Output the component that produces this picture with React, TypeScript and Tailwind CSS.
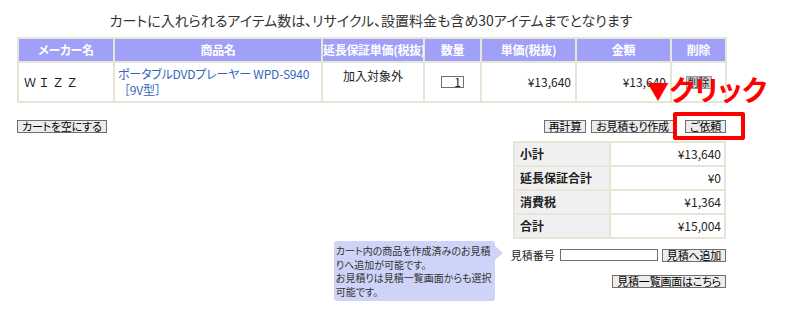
import React from 'react';

const jp = "font-['Noto_Sans_CJK_JP',sans-serif] [font-feature-settings:'palt']";

function OldButton({ label, className = '' }: { label: string; className?: string }) {
  return (
    <button
      className={`h-[13px] whitespace-nowrap border border-[#6f6f6f] bg-[#ececec] px-[4px] text-[11px] leading-[11px] tracking-[-0.2px] text-black ${className}`}
    >
      {label}
    </button>
  );
}

const headers = [
  { label: 'メーカー名', w: 'w-[96px]' },
  { label: '商品名', w: 'w-[208px]' },
  { label: '延長保証単価(税抜)', w: 'w-[102px]' },
  { label: '数量', w: 'w-[57px]' },
  { label: '単価(税抜)', w: 'w-[95px]' },
  { label: '金額', w: 'w-[95px]' },
  { label: '削除', w: 'w-[55px]' },
];

const summary = [
  { label: '小計', value: '¥13,640' },
  { label: '延長保証合計', value: '¥0' },
  { label: '消費税', value: '¥1,364' },
  { label: '合計', value: '¥15,004' },
];

export default function App() {
  return (
    <div className={`relative h-[312px] w-[785px] overflow-hidden bg-white text-[12px] text-[#222] ${jp}`}>
      <div className="w-[742px] pt-[10px]">
        <p className="text-center text-[14px] leading-[20px] text-[#333]">
          カートに入れられるアイテム数は、リサイクル、設置料金も含め30アイテムまでとなります
        </p>

        <table className="ml-[17px] mt-[7px] w-[708px] table-fixed border-collapse border-2 border-[#e6e6d6]">
          <thead>
            <tr className="h-[24px] bg-[#a0a0f8]">
              {headers.map((h) => (
                <th
                  key={h.label}
                  className={`${h.w} whitespace-nowrap border-2 border-[#e6e6d6] p-0 text-center text-[12px] font-bold leading-[18px] tracking-[-0.3px] text-white`}
                >
                  {h.label}
                </th>
              ))}
            </tr>
          </thead>
          <tbody>
            <tr className="h-[40px]">
              <td className="border-2 border-[#e6e6d6] pl-[5px] align-middle tracking-[2px] [font-feature-settings:normal]">
                ＷＩＺＺ
              </td>
              <td className="border-2 border-[#e6e6d6] pl-[3px] align-middle leading-[16px] tracking-[-0.2px] text-[#3366bb]">
                ポータブルDVDプレーヤー WPD-S940
                <br />
                <span className="[font-feature-settings:normal]">［9V型］</span>
              </td>
              <td className="border-2 border-[#e6e6d6] pt-[4px] text-center align-top">加入対象外</td>
              <td className="border-2 border-[#e6e6d6] text-center align-middle">
                <span className="inline-block h-[12px] w-[23px] border border-[#6f6f6f] pr-[2px] text-right text-[12px] leading-[10px]">
                  1
                </span>
              </td>
              <td className="border-2 border-[#e6e6d6] pr-[4px] text-right align-middle">¥13,640</td>
              <td className="border-2 border-[#e6e6d6] pr-[4px] text-right align-middle">¥13,640</td>
              <td className="border-2 border-[#e6e6d6] text-center align-middle">
                <span className="inline-block h-[13px] border border-[#999] bg-[#d4d4d4] px-[1px] text-[11px] leading-[11px]">
                  削除
                </span>
              </td>
            </tr>
          </tbody>
        </table>

        <div className="mt-[17px] flex items-center justify-between pl-[17px] pr-[16px]">
          <OldButton label="カートを空にする" />
          <div className="flex items-center gap-[5px]">
            <OldButton label="再計算" />
            <OldButton label="お見積もり作成" />
            <OldButton label="ご依頼" className="ml-[6px]" />
          </div>
        </div>

        <div className="mt-[8px] flex justify-end pr-[16px]">
          <table className="w-[213px] table-fixed border-collapse border-2 border-[#e6e6d6]">
            <tbody>
              {summary.map((s) => (
                <tr key={s.label} className="h-[24px]">
                  <td className="w-[96px] border-2 border-[#e6e6d6] bg-[#f0f0f0] pl-[5px] font-bold">{s.label}</td>
                  <td className="border-2 border-[#e6e6d6] pr-[3px] text-right">{s.value}</td>
                </tr>
              ))}
            </tbody>
          </table>
        </div>

        <div className="mt-[2px] flex items-start justify-end pr-[16px]">
          <div className="relative mr-[16px] w-[161px] rounded-[3px] bg-[#cdd4f7] px-[2px] py-[3px] text-[10px] leading-[13.5px] text-[#333]">
            <div className="whitespace-nowrap">カート内の商品を作成済みのお見積</div>
            <div className="whitespace-nowrap">りへ追加が可能です。</div>
            <div className="whitespace-nowrap">お見積りは見積一覧画面からも選択</div>
            <div className="whitespace-nowrap">可能です。</div>
            <span className="absolute right-[-8px] top-[5px] h-0 w-0 border-y-[7px] border-l-[8px] border-y-transparent border-l-[#cdd4f7]" />
          </div>
          <div className="flex flex-col items-end pt-[6px]">
            <div className="flex items-center">
              <span className="mr-[5px] text-[11px]">見積番号</span>
              <span className="inline-block h-[12px] w-[98px] border border-[#6f6f6f]" />
              <OldButton label="見積へ追加" className="ml-[4px]" />
            </div>
            <OldButton label="見積一覧画面はこちら" className="mt-[11px]" />
          </div>
        </div>
      </div>

      <div className="absolute left-[647px] top-[75px] flex items-center text-[#ff0000]">
        <span className="text-[22px] leading-none">▼</span>
        <span className="text-[28px] font-bold leading-none">クリック</span>
      </div>
      <div className="absolute left-[673px] top-[112px] h-[28px] w-[72px] rounded-[2px] border-[4px] border-[#ff0000]" />
    </div>
  );
}
